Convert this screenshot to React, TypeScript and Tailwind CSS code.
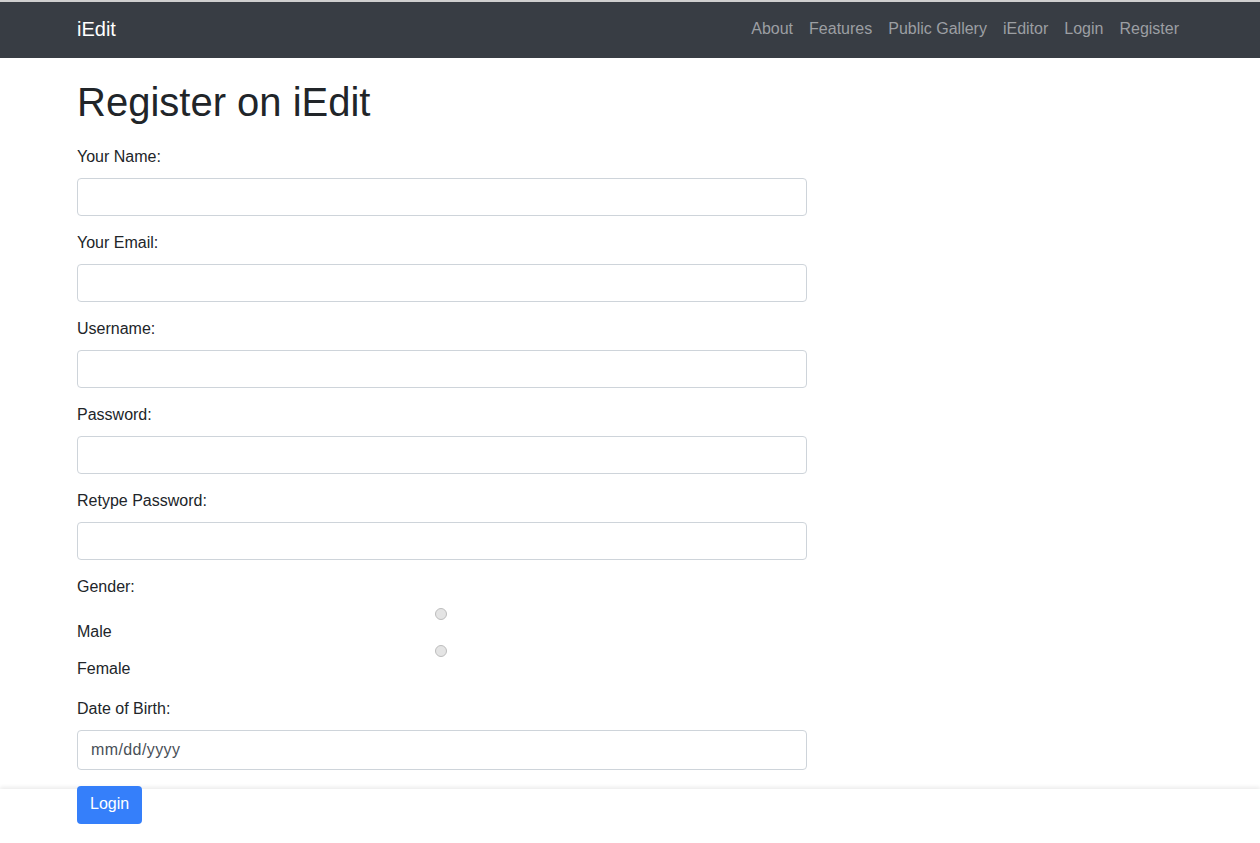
import React from 'react';

const links = ['About', 'Features', 'Public Gallery', 'iEditor', 'Login', 'Register'];

const fields = [
  { label: 'Your Name:', type: 'text' },
  { label: 'Your Email:', type: 'email' },
  { label: 'Username:', type: 'text' },
  { label: 'Password:', type: 'password' },
  { label: 'Retype Password:', type: 'password' },
];

// labels sit 1px higher than a plain 24px line box
const lineText = 'block leading-[22px] pb-[2px]';

const Radio = () => (
  <div className="flex h-[13px] justify-center pr-[2px]">
    <span className="block h-[12px] w-[12px] rounded-full border border-[#bdbdbd] bg-[#e4e4e4]" />
  </div>
);

const App = () => {
  return (
    <div className="min-h-screen bg-white font-['Liberation_Sans',Arial,sans-serif] text-[16px] text-[#212529]">
      <nav className="h-[58px] border-t-2 border-[#cfcfcf] bg-[#383d44]">
        <div className="mx-[77px] flex h-full items-center justify-between pb-[2px]">
          <a className="text-[20px] leading-[30px] text-white">iEdit</a>
          <ul className="-mr-1 flex">
            {links.map((l) => (
              <li key={l} className="px-2 leading-6 text-[#9c9fa3]">
                {l}
              </li>
            ))}
          </ul>
        </div>
      </nav>

      <main className="mx-[77px]">
        <h1 className="mt-5 mb-5 text-[40px] leading-[48px] font-normal">Register on iEdit</h1>
        <form className="w-[730px]">
          {fields.map((f) => (
            <div key={f.label} className="mb-4">
              <label className={`${lineText} mb-2`}>{f.label}</label>
              <input
                type={f.type}
                className="block h-[38px] w-full rounded border border-[#ced4da] bg-white px-3 outline-none"
              />
            </div>
          ))}

          <div className="mb-4">
            <div className={`${lineText} mb-2`}>Gender:</div>
            <Radio />
            <div className={lineText}>Male</div>
            <Radio />
            <div className={lineText}>Female</div>
          </div>

          <div className="mb-4">
            <label className={`${lineText} mb-2`}>Date of Birth:</label>
            <input
              type="text"
              placeholder="mm/dd/yyyy"
              className="block h-[40px] w-full rounded border border-[#ced4da] bg-white px-[13px] tracking-[0.4px] text-[#495057] outline-none placeholder:text-[#495057]"
            />
          </div>

          <button
            type="button"
            className="relative z-10 h-[38px] rounded bg-[#357ffa] px-[13px] pb-[2px] leading-[22px] text-white"
          >
            Login
          </button>
        </form>
      </main>

      <div className="fixed right-0 bottom-0 left-0 h-[54px] bg-white shadow-[0_-2px_4px_rgba(0,0,0,0.08)]" />
    </div>
  );
};

export default App;
